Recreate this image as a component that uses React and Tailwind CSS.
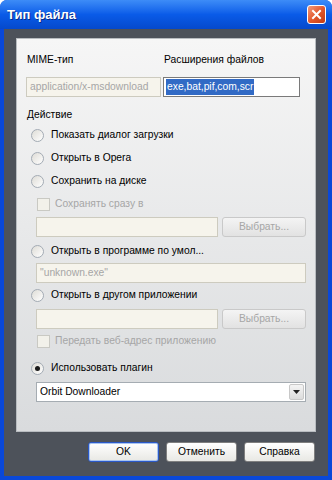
import React from "react";

const Radio = ({ checked, label }) => (
  <div className="h-[22px] flex items-center pl-[14px]">
    <span className="w-[13px] h-[13px] rounded-full border border-[#a3abb4] bg-gradient-to-br from-[#dedcd6] to-white flex items-center justify-center">
      {checked && <span className="w-[5px] h-[5px] rounded-full bg-[#1a1a1a]" />}
    </span>
    <span className="ml-[7px] text-black">{label}</span>
  </div>
);

const Check = ({ label }) => (
  <div className="h-[22px] flex items-center pl-[20px]">
    <span className="w-[13px] h-[13px] border border-[#c9c9c3] bg-[#f2f1ea]" />
    <span className="ml-[5px] text-[#a6a6a6]">{label}</span>
  </div>
);

const DisabledInput = ({ text, className = "" }) => (
  <div
    className={`h-[20px] border border-[#cdcbbf] bg-[#f6f4ec] flex items-center px-[3px] text-[#a6a6a6] overflow-hidden whitespace-nowrap ${className}`}
  >
    {text}
  </div>
);

const BrowseButton = () => (
  <div className="w-[84px] h-[20px] rounded-[3px] border border-[#c9c9c9] bg-gradient-to-b from-[#f4f4f4] to-[#e2e2e2] flex items-center justify-center text-[#a6a6a6]">
    Выбрать...
  </div>
);

const Button = ({ children, focused }) => (
  <div
    className={`w-[71px] h-[20px] rounded-[3px] border flex items-center justify-center text-black bg-gradient-to-b from-white to-[#e8e8e4] ${
      focused ? "border-[#2a58c8] shadow-[inset_0_0_0_1px_#a8c4f0]" : "border-[#7f7f7f]"
    }`}
  >
    {children}
  </div>
);

export default function App() {
  return (
    <div
      className="w-[332px] h-[480px] bg-[#0a48d8] rounded-t-[7px] flex flex-col overflow-hidden text-[10.3px] leading-none"
      style={{ fontFamily: '"Liberation Sans", Arial, sans-serif' }}
    >
      {/* title bar */}
      <div className="h-[29px] shrink-0 bg-gradient-to-b from-[#3d8cf7] via-[#0a5be8] to-[#0549cc] flex items-center pl-[7px] pr-[6px]">
        <span className="text-white font-bold text-[13px] [text-shadow:1px_1px_0_#0a2a8a]">Тип файла</span>
        <div className="ml-auto w-[19px] h-[19px] rounded-[3px] border border-white bg-gradient-to-br from-[#f09a7a] via-[#e3582c] to-[#c23a12] flex items-center justify-center">
          <svg width="11" height="11" viewBox="0 0 11 11">
            <path d="M2 2 L9 9 M9 2 L2 9" stroke="white" strokeWidth="2" strokeLinecap="square" />
          </svg>
        </div>
      </div>

      {/* body */}
      <div className="flex-1 mx-[4px] mb-[4px] bg-[#4d525a] flex flex-col">
        <div className="mt-[9px] mx-[12px] h-[394px] border border-[#b8bcc0] bg-gradient-to-b from-[#f6f6f6] to-[#d9dbdd] flex flex-col pt-[14px]">
          <div className="h-[14px] flex items-center pl-[10px] text-black">
            <span className="w-[137px]">MIME-тип</span>
            <span>Расширения файлов</span>
          </div>
          <div className="mt-[10px] flex pl-[9px] gap-[2px]">
            <DisabledInput text="application/x-msdownload" className="w-[135px]" />
            <div className="w-[137px] h-[20px] border border-[#7a7a7a] bg-white flex items-center px-[2px]">
              <span className="bg-[#316ac5] text-white px-[1px] py-[3px]">exe,bat,pif,com,scr</span>
            </div>
          </div>
          <div className="mt-[11px] h-[14px] flex items-center pl-[10px] text-black">Действие</div>
          <div className="mt-[2px] flex flex-col">
            <div className="[&>div]:h-[23px]">
              <Radio label="Показать диалог загрузки" />
              <Radio label="Открыть в Opera" />
              <Radio label="Сохранить на диске" />
              <Check label="Сохранять сразу в" />
            </div>
            <div className="mt-[1px] flex pl-[19px] gap-[4px]">
              <DisabledInput text="" className="w-[182px]" />
              <BrowseButton />
            </div>
            <div className="mt-[3px]">
              <Radio label="Открыть в программе по умол..." />
            </div>
            <div className="mt-[1px] pl-[19px] pr-[9px]">
              <DisabledInput text={'"unknown.exe"'} />
            </div>
            <div className="mt-[1px]">
              <Radio label="Открыть в другом приложении" />
            </div>
            <div className="mt-[3px] flex pl-[19px] gap-[4px]">
              <DisabledInput text="" className="w-[182px]" />
              <BrowseButton />
            </div>
            <div className="mt-[1px]">
              <Check label="Передать веб-адрес приложению" />
            </div>
            <div className="mt-[5px]">
              <Radio checked label="Использовать плагин" />
            </div>
            <div className="mt-[3px] pl-[19px] pr-[9px]">
              <div className="h-[20px] border border-[#a5acb2] bg-white flex items-center pl-[3px] pr-[1px] text-black">
                <span>Orbit Downloader</span>
                <div className="ml-auto w-[15px] h-[16px] rounded-[2px] bg-gradient-to-b from-[#f4f4f4] to-[#dcdcdc] border border-[#c8c8c8] flex items-center justify-center">
                  <svg width="7" height="4" viewBox="0 0 7 4">
                    <path d="M0 0 H7 L3.5 4 Z" fill="#222" />
                  </svg>
                </div>
              </div>
            </div>
          </div>
        </div>

        <div className="mt-[10px] flex justify-end pr-[13px] gap-[7px]">
          <Button focused>OK</Button>
          <Button>Отменить</Button>
          <Button>Справка</Button>
        </div>
      </div>
    </div>
  );
}
